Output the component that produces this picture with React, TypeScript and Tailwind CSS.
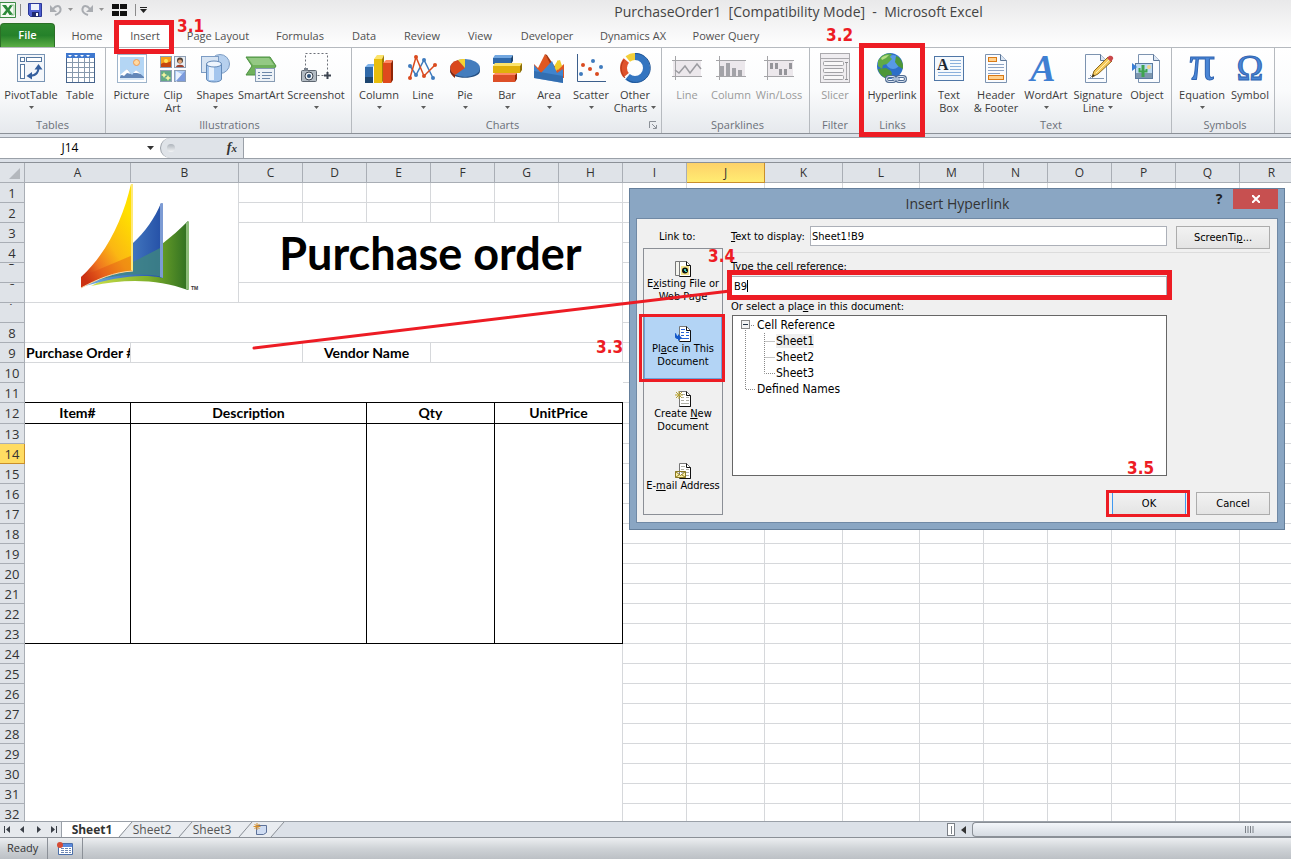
import type { ReactNode } from "react";

const UI = "font-['Open_Sans','Noto_Sans',sans-serif]";
const DLG = "font-['DejaVu_Sans_Condensed','DejaVu_Sans',sans-serif]";
const CELL = "font-['Lato','Open_Sans',sans-serif]";

/* ---------- ribbon icons ---------- */

function Svg({ children }: { children: ReactNode }) {
  return (
    <svg viewBox="0 0 32 32" className="h-8 w-8 shrink-0 overflow-visible" fill="none" aria-hidden="true">
      {children}
    </svg>
  );
}

const PivotIcon = () => (
  <Svg>
    <rect x="2.5" y="2.5" width="27" height="27" fill="#f4f7fb" stroke="#7894b4" />
    <rect x="5.5" y="5.5" width="4" height="4" fill="#fff" stroke="#55779f" />
    <rect x="11.5" y="5.5" width="15" height="4" fill="#fff" stroke="#55779f" />
    <rect x="5.5" y="12.5" width="4" height="14" fill="#fff" stroke="#55779f" />
    <path d="M15 24C22 23 23.500 20 23.500 15" stroke="#355f9e" strokeWidth="2" />
    <path d="M19.500 17.500 23.500 12l4 5.500zM17 20l-5.500 4 5.500 3.500z" fill="#355f9e" />
  </Svg>
);

const TableIcon = () => (
  <Svg>
    <rect x="2.500" y="1.500" width="28" height="29" fill="#fff" stroke="#46648c" />
    <rect x="2" y="1" width="29" height="5" fill="#3f78cf" />
    <path d="M4 3h4l-2 2zM10 3h4l-2 2zM16 3h4l-2 2zM22 3h4l-2 2z" fill="#fff" />
    <path d="M8.500 6v24M14.500 6v24M20.500 6v24M25.500 6v24M3 10.500h27M3 15.500h27M3 20.500h27M3 25.500h27" stroke="#8799ad" />
  </Svg>
);

const PictureIcon = () => (
  <Svg>
    <rect x="1.500" y="2.500" width="29" height="28" fill="#fff" stroke="#9eb4cb" />
    <rect x="4" y="5" width="24" height="23" fill="#b4d6f5" />
    <circle cx="20.500" cy="10.500" r="3" fill="#ffd9a0" stroke="#f09a52" />
    <path d="M4 25l7-8 5 6 4-5 8 7v3H4z" fill="#6387b8" />
    <path d="M4 23l7-6 4 5-4-1-3 3-2-1zM17 21l3-3 5 4-4-1z" fill="#fff" />
    <path d="M4 26h24v2H4z" fill="#d5e6f6" />
  </Svg>
);

const ClipArtIcon = () => (
  <Svg>
    <rect x="3.500" y="4.500" width="11" height="11" fill="#f6a21d" stroke="#8e9fb5" />
    <path d="M4 12c3-3 7 0 10-3v6H4z" fill="#c5480f" />
    <circle cx="9" cy="9" r="2" fill="#ffe65b" />
    <rect x="17.500" y="4.500" width="11" height="11" fill="#e9eef3" stroke="#8e9fb5" />
    <circle cx="23" cy="8.500" r="3" fill="#4e4136" />
    <circle cx="23" cy="9.500" r="2" fill="#e3a477" />
    <path d="M19 15c0-3 8-3 8 0z" fill="#9c3f2d" />
    <rect x="3.500" y="18.500" width="11" height="11" fill="#63a987" stroke="#8e9fb5" />
    <path d="M7 20l1 2 2 1-2 1-1 2-1-2-2-1 2-1zM11 23l1 2 2 1-2 1-1 2-1-2-2-1 2-1z" fill="#f3f3a0" />
    <rect x="17.500" y="18.500" width="11" height="11" fill="#aac8f3" stroke="#8e9fb5" />
    <path d="M19 19l9 5-9 6z" fill="#e9f1fd" />
    <path d="M28 19v10h-9z" fill="#7c9bdd" />
  </Svg>
);

const ShapesIcon = () => (
  <Svg>
    <circle cx="21" cy="12" r="9.500" fill="#b6d0ee" stroke="#7c9cc4" />
    <rect x="2.500" y="4.500" width="17" height="16" fill="#d7e4f3" stroke="#7c9cc4" />
    <path d="M7.500 12v15c0 4 15 4 15 0V12z" fill="#a3c5ed" stroke="#6389b7" />
    <path d="M10 14v14h5V14z" fill="#e7f1fc" />
    <ellipse cx="15" cy="12" rx="7.500" ry="3" fill="#eef5fd" stroke="#6389b7" />
  </Svg>
);

const SmartArtIcon = () => (
  <Svg>
    <path d="M1 5h24l6 9-6 9H1l6-9z" fill="#6fb15c" stroke="#4c9142" />
    <path d="M3 6h21l5 7H8z" fill="#94c984" />
    <rect x="10.500" y="16.500" width="19" height="13" fill="#edf2f7" stroke="#879bb3" />
    <path d="M13 20.500h2M17 20.500h10M13 23.500h2M17 23.500h10M13 26.500h2M17 26.500h8" stroke="#6b87a8" />
  </Svg>
);

const ScreenshotIcon = () => (
  <Svg>
    <rect x="5.500" y="1.500" width="22" height="22" stroke="#6c7078" strokeDasharray="2 2" />
    <path d="M27.500 20v7M24 23.500h7" stroke="#3c4450" strokeWidth="2" />
    <rect x="1.500" y="18.500" width="15" height="11" rx="1" fill="#b3bbc3" stroke="#5d6670" />
    <path d="M4 16h4v3H4z" fill="#77808a" />
    <circle cx="9" cy="24" r="4" fill="#eef2f5" stroke="#3c4450" />
    <circle cx="9" cy="24" r="2" fill="#2f5177" />
  </Svg>
);

const ColumnIcon = () => (
  <Svg>
    <path d="M2 15l3-3h7l-2 3z" fill="#7db2ea" />
    <path d="M2 15h8v16H2z" fill="#2f69a8" />
    <path d="M2 25h8v6H2z" fill="#1d456f" />
    <path d="M11 7l3-4h7l-2 4z" fill="#fbe36b" />
    <path d="M11 7h8v24h-8z" fill="#e8bd0c" />
    <path d="M19 7l2-4v24l-2 4z" fill="#a17f04" />
    <path d="M20 11l3-3h7l-2 3z" fill="#ff8a63" />
    <path d="M20 11h8v20h-8z" fill="#df4a1d" />
    <path d="M28 11l2-3v20l-2 3z" fill="#8f2506" />
  </Svg>
);

const LineIcon = () => (
  <Svg>
    <path d="M3 14l6 9 8-15 9 18" stroke="#3f7bbd" strokeWidth="1.500" />
    <path d="M3 26L9 5l8 19 11-11" stroke="#da4b1f" strokeWidth="1.500" />
    <g fill="#3f7bbd"><circle cx="3" cy="14" r="2" /><circle cx="9" cy="23" r="2" /><circle cx="17" cy="8" r="2" /><circle cx="26" cy="26" r="2" /></g>
    <g fill="#da4b1f"><circle cx="3" cy="26" r="2" /><circle cx="9" cy="5" r="2" /><circle cx="17" cy="24" r="2" /><circle cx="28" cy="13" r="2" /></g>
  </Svg>
);

const PieIcon = () => (
  <Svg>
    <path d="M1 16v3c0 9 30 9 30 0v-3z" fill="#244e80" />
    <ellipse cx="16" cy="16" rx="15" ry="9" fill="#447dbd" />
    <path d="M16 16L9 8C-1 11-1 19 6 23z" fill="#d9481c" />
    <path d="M16 16V7c-3 0-5 0-7 1z" fill="#f5d231" />
    <path d="M1 17c0 4 2 7 5 9v-3c-2-1-4-3-5-6z" fill="#8f2506" />
  </Svg>
);

const BarIcon = () => (
  <Svg>
    <path d="M2 6l2-3h18l-2 3z" fill="#72a7e0" /><path d="M2 6h18v6H2z" fill="#2f69ab" /><path d="M20 6l2-3v6l-2 3z" fill="#1d456f" />
    <path d="M2 14l2-3h27l-2 3z" fill="#fbe36b" /><path d="M2 14h27v7H2z" fill="#dfb00b" /><path d="M29 14l2-3v7l-2 3z" fill="#8f7004" />
    <path d="M2 23l2-2h22l-2 2z" fill="#ff8a63" /><path d="M2 23h22v7H2z" fill="#dd4f27" /><path d="M24 23l2-2v6l-2 3z" fill="#8f2506" />
  </Svg>
);

const AreaIcon = () => (
  <Svg>
    <path d="M20 16l5-8 2 5 1 6h-8z" fill="#f0cc2c" />
    <path d="M1 12l4 4 7-14 11 17 8-7v14L1 24z" fill="#df5722" />
    <path d="M12 2l2 1 8 12-2 2z" fill="#a3340d" />
    <path d="M24 9l3-1 2 6-4 4z" fill="#f0cc2c" />
    <path d="M1 13l7 8L19 9l5 12 6-4v14L1 26z" fill="#3f84ce" />
    <path d="M1 19l29 5v7L1 26z" fill="#2a5f9f" opacity=".6" />
  </Svg>
);

const ScatterIcon = () => (
  <Svg>
    <path d="M2.500 2v27.500H31" stroke="#3c5f8c" />
    <g fill="#3f7bbd"><circle cx="18" cy="9" r="2" /><circle cx="26" cy="15" r="2" /><circle cx="6" cy="22" r="2" /></g>
    <g fill="#da4b1f"><circle cx="8" cy="13" r="2" /><circle cx="15" cy="17" r="2" /><circle cx="22" cy="22" r="2" /></g>
  </Svg>
);

const OtherIcon = () => (
  <Svg>
    <g transform="rotate(-90 16 16)" strokeWidth="7">
      <circle cx="16" cy="16" r="11.500" stroke="#3475c0" strokeDasharray="44 100" />
      <circle cx="16" cy="16" r="11.500" stroke="#e0532c" strokeDasharray="16 100" strokeDashoffset="-46" />
      <circle cx="16" cy="16" r="11.500" stroke="#f3cf39" strokeDasharray="8 100" strokeDashoffset="-64" />
    </g>
    <path d="M16 1.500a14.500 14.500 0 1 1-8 26" stroke="#1f5596" />
    <path d="M6 26C1 20 1 13 5 8" stroke="#b33a18" />
  </Svg>
);

const SparkLineIcon = () => (
  <Svg>
    <path d="M2 8h28v16H2z" fill="#ece8ec" />
    <path d="M1 8.500h30M1 24.500h30M4.500 4v24" stroke="#a5a5a8" />
    <path d="M4 18l4 3 6-7 5 7 7-9 4 5" stroke="#9b9ba0" strokeWidth="1.500" />
  </Svg>
);

const SparkColumnIcon = () => (
  <Svg>
    <path d="M4 8h26v16H4z" fill="#ece8ec" />
    <path d="M1 8.500h30M1 24.500h30M4.500 4v24" stroke="#a5a5a8" />
    <path d="M5 14h4v10H5zM11 11h4v13h-4zM17 16h4v8h-4zM23 18h4v6h-4z" fill="#a3a3a8" />
  </Svg>
);

const SparkWinIcon = () => (
  <Svg>
    <path d="M4 8h26v16H4z" fill="#ece8ec" />
    <path d="M1 8.500h30M1 24.500h30M4.500 4v24" stroke="#a5a5a8" />
    <path d="M7 11h3v6H7zM12 11h3v6h-3zM16 17h3v6h-3zM21 17h3v6h-3zM26 11h3v6h-3z" fill="#95959a" />
  </Svg>
);

const SlicerIcon = () => (
  <Svg>
    <rect x="1.500" y="1.500" width="29" height="29" fill="#efedf0" stroke="#aaa9ad" />
    <path d="M2 6.500h28M27.500 10v18" stroke="#aaa9ad" />
    <path d="M26 10.500h3M26 27.500h3" stroke="#8f8f93" />
    <rect x="4.500" y="9.500" width="20" height="4" rx="1" fill="#f8f7f8" stroke="#a1a1a5" />
    <rect x="4.500" y="16.500" width="20" height="4" rx="1" fill="#f8f7f8" stroke="#a1a1a5" />
    <rect x="4.500" y="23.500" width="20" height="4" rx="1" fill="#f8f7f8" stroke="#a1a1a5" />
  </Svg>
);

const HyperlinkIcon = () => (
  <Svg>
    <circle cx="14" cy="14" r="13" fill="#2d6fc8" />
    <circle cx="17" cy="10" r="7" fill="#62a4ec" opacity=".8" />
    <path d="M2 9c3-6 9-9 14-7l-2 3 2 2-5 5-4 1-1 4-4-3z" fill="#5faa46" />
    <path d="M2 17l8-1 5 3 1 3-3 5C7 26 3 22 2 17zM20 4c4 1 6 5 7 9v4l-5-3-3-4z" fill="#4d9739" />
    <path d="M5 6c2-2 5-3 8-3l-3 3-4 2z" fill="#b3dd84" />
    <rect x="10.500" y="24.500" width="9" height="5" rx="2.500" stroke="#4f6b92" strokeWidth="3" />
    <rect x="20.500" y="24.500" width="9" height="5" rx="2.500" stroke="#4f6b92" strokeWidth="3" />
    <rect x="10.500" y="24.500" width="9" height="5" rx="2.500" stroke="#d8e2f0" />
    <rect x="20.500" y="24.500" width="9" height="5" rx="2.500" stroke="#d8e2f0" />
    <path d="M16 27h8" stroke="#a9bbd5" strokeWidth="2" />
  </Svg>
);

const TextBoxIcon = () => (
  <Svg>
    <rect x="1.500" y="4.500" width="29" height="24" fill="#f5f9fd" stroke="#4f76a6" />
    <text x="4" y="18" fontSize="16" fontWeight="bold" fontFamily="Liberation Serif, serif" fill="#1d2733">A</text>
    <path d="M17 8.500h11M17 11.500h11M17 14.500h11M17 17.500h11M5 20.500h23M5 23.500h23" stroke="#8ab0dc" />
  </Svg>
);

const HeaderIcon = () => (
  <Svg>
    <path d="M5.500 2.500h15l6 6v22h-21z" fill="#fafcff" stroke="#7c93b0" />
    <path d="M20.500 2.500v6h6" fill="#dbe6f3" stroke="#5c7697" />
    <rect x="8.500" y="5.500" width="8" height="4" fill="#ffd18f" stroke="#d97a16" />
    <rect x="8.500" y="23.500" width="15" height="4" fill="#ffd18f" stroke="#d97a16" />
    <path d="M8 12.500h16M8 15.500h16M8 18.500h16M8 21.500h12" stroke="#8ea4c4" />
  </Svg>
);

const WordArtIcon = () => (
  <Svg>
    <text x="13" y="29" textAnchor="middle" fontSize="38" fontStyle="italic" fontWeight="bold" fontFamily="Liberation Serif, serif" fill="#3f7fd2">A</text>
  </Svg>
);

const SignatureIcon = () => (
  <Svg>
    <path d="M3.500 2.500h15l6 6v22h-21z" fill="#fafcff" stroke="#7c93b0" />
    <path d="M18.500 2.500v6h6" fill="#dbe6f3" stroke="#5c7697" />
    <path d="M6 26.500h16M8 23l3 3M11 23l-3 3" stroke="#8196b4" />
    <path d="M10 25l2-6L26 5l4 4-14 13z" fill="#f4c95d" stroke="#8d6a1d" />
    <path d="M14 21L28 7" stroke="#fff0b5" />
    <path d="M25 6l2-2c2-1 5 1 4 3l-2 3z" fill="#c9474a" />
    <path d="M10 25l1-3 2 2z" fill="#332a1c" />
  </Svg>
);

const ObjectIcon = () => (
  <Svg>
    <path d="M7.500 2.500h15l6 6v22h-21z" fill="#fafcff" stroke="#7c93b0" />
    <path d="M22.500 2.500v6h6" fill="#dbe6f3" stroke="#5c7697" />
    <rect x="4.500" y="11.500" width="17" height="15" fill="#bcdaf2" stroke="#5b7a9f" />
    <path d="M5 21h16v5H5z" fill="#7d97ae" />
    <circle cx="18" cy="15" r="2" fill="#f5d58b" />
    <path d="M12 13v12" stroke="#3fa34f" strokeWidth="3" />
    <path d="M8.500 16v3.500h7V17" stroke="#3fa34f" strokeWidth="2" />
    <path d="M1 11l5 4-5 4z" fill="#3a7fd5" />
  </Svg>
);

const PiIcon = () => (
  <Svg>
    <text x="16" y="28" textAnchor="middle" fontSize="50" fontFamily="Liberation Serif, serif" fill="#4a86d6" stroke="#2f64b2">π</text>
  </Svg>
);

const OmegaIcon = () => (
  <Svg>
    <text x="16" y="28" textAnchor="middle" fontSize="36" fontFamily="Liberation Serif, serif" fill="#4a86d6" stroke="#2f64b2">Ω</text>
  </Svg>
);

/* ---------- ribbon ---------- */

type Cmd = { lines: string[]; icon: ReactNode; w: string; arrow?: boolean; off?: boolean };

const groups: { title: string; w: string; cmds: Cmd[]; launcher?: boolean }[] = [
  {
    title: "Tables",
    w: "w-[106px]",
    cmds: [
      { lines: ["PivotTable"], icon: <PivotIcon />, w: "w-[62px]", arrow: true },
      { lines: ["Table"], icon: <TableIcon />, w: "w-9" },
    ],
  },
  {
    title: "Illustrations",
    w: "w-[246px] pl-0.5",
    cmds: [
      { lines: ["Picture"], icon: <PictureIcon />, w: "w-[47px]" },
      { lines: ["Clip", "Art"], icon: <ClipArtIcon />, w: "w-9" },
      { lines: ["Shapes"], icon: <ShapesIcon />, w: "w-12", arrow: true },
      { lines: ["SmartArt"], icon: <SmartArtIcon />, w: "w-11" },
      { lines: ["Screenshot"], icon: <ScreenshotIcon />, w: "w-[66px]", arrow: true },
    ],
  },
  {
    title: "Charts",
    w: "w-[310px] pl-1",
    launcher: true,
    cmds: [
      { lines: ["Column"], icon: <ColumnIcon />, w: "w-[46px]", arrow: true },
      { lines: ["Line"], icon: <LineIcon />, w: "w-[42px]", arrow: true },
      { lines: ["Pie"], icon: <PieIcon />, w: "w-[42px]", arrow: true },
      { lines: ["Bar"], icon: <BarIcon />, w: "w-[42px]", arrow: true },
      { lines: ["Area"], icon: <AreaIcon />, w: "w-[42px]", arrow: true },
      { lines: ["Scatter"], icon: <ScatterIcon />, w: "w-[42px]", arrow: true },
      { lines: ["Other", "Charts"], icon: <OtherIcon />, w: "w-[46px]", arrow: true },
    ],
  },
  {
    title: "Sparklines",
    w: "w-[148px] pl-1",
    cmds: [
      { lines: ["Line"], icon: <SparkLineIcon />, w: "w-[42px]", off: true },
      { lines: ["Column"], icon: <SparkColumnIcon />, w: "w-[46px]", off: true },
      { lines: ["Win/Loss"], icon: <SparkWinIcon />, w: "w-[50px]", off: true },
    ],
  },
  { title: "Filter", w: "w-[51px]", cmds: [{ lines: ["Slicer"], icon: <SlicerIcon />, w: "w-[50px]", off: true }] },
  { title: "Links", w: "w-16", cmds: [{ lines: ["Hyperlink"], icon: <HyperlinkIcon />, w: "w-[62px]" }] },
  {
    title: "Text",
    w: "w-[247px] pl-1.5",
    cmds: [
      { lines: ["Text", "Box"], icon: <TextBoxIcon />, w: "w-9" },
      { lines: ["Header", "& Footer"], icon: <HeaderIcon />, w: "w-[58px]" },
      { lines: ["WordArt"], icon: <WordArtIcon />, w: "w-[42px]", arrow: true },
      { lines: ["Signature", "Line"], icon: <SignatureIcon />, w: "w-[62px]", arrow: true },
      { lines: ["Object"], icon: <ObjectIcon />, w: "w-9" },
    ],
  },
  {
    title: "Symbols",
    w: "w-[103px] pl-1",
    cmds: [
      { lines: ["Equation"], icon: <PiIcon />, w: "w-[52px]", arrow: true },
      { lines: ["Symbol"], icon: <OmegaIcon />, w: "w-11" },
    ],
  },
];

function Caret({ className = "" }: { className?: string }) {
  return (
    <svg viewBox="0 0 5 3" className={`h-[3px] w-[5px] shrink-0 ${className}`} aria-hidden="true">
      <path d="M0 0h5L2.500 3z" fill="#5b5b5b" />
    </svg>
  );
}

function Command({ cmd }: { cmd: Cmd }) {
  return (
    <button
      type="button"
      disabled={cmd.off}
      className={`flex h-[66px] shrink-0 flex-col items-center text-[11px] leading-[13px] whitespace-nowrap ${cmd.w} ${cmd.off ? "text-[#9a9a9a]" : "text-[#3b3b3b]"}`}
    >
      {cmd.icon}
      <span className="mt-1">{cmd.lines[0]}</span>
      {cmd.lines[1] ? (
        <span className="flex items-center gap-1">
          {cmd.lines[1]}
          {cmd.arrow && <Caret />}
        </span>
      ) : (
        cmd.arrow && <Caret className="mt-[5px]" />
      )}
    </button>
  );
}

function Ribbon() {
  return (
    <div className="flex h-[86px] shrink-0 overflow-hidden border-b border-[#8b9097] bg-linear-to-b from-white via-[#fafbfc] to-[#e6e9ed]">
      {groups.map((g) => (
        <section key={g.title} className={`flex shrink-0 flex-col border-r border-[#b6babf] pt-1 ${g.w}`}>
          <div className="flex">
            {g.cmds.map((c) => (
              <Command key={c.lines.join(" ")} cmd={c} />
            ))}
          </div>
          <div className="flex items-center text-[11px] leading-[14px] text-[#6b7079]">
            <span className="flex-1 text-center">{g.title}</span>
            {g.launcher && (
              <svg viewBox="0 0 8 8" className="mr-1 h-2 w-2" fill="none" stroke="#8b9097" aria-hidden="true">
                <path d="M.5 7V.5H7M3 3l4 4M7.500 4v3.500H4" />
              </svg>
            )}
          </div>
        </section>
      ))}
    </div>
  );
}

/* ---------- title bar and tabs ---------- */

function TitleBar() {
  return (
    <div className="flex h-[23px] shrink-0 items-center">
      <div className="flex w-[306px] shrink-0 items-center pb-1">
        <svg viewBox="0 0 16 16" className="h-4 w-4" aria-hidden="true">
          <path d="M0 .5h15.500v15H0z" fill="#f4faf3" stroke="#3c8b45" />
          <path d="M2 3h4l2 3 2-3h3L9.500 8l4 5h-4L7.500 10l-2 3H2l4-5z" fill="#2c8a3a" />
          <path d="M11 3h3v10h-3" stroke="#9ccb9e" fill="none" />
        </svg>
        <span className="ml-1 h-3 w-px bg-[#8b8b8b]" />
        <svg viewBox="0 0 14 14" className="ml-[7px] h-3.5 w-3.5" aria-hidden="true">
          <path d="M.5.5h13v13h-11l-2-2z" fill="#4d5ed0" stroke="#2b3796" />
          <path d="M3 1h8v6H3z" fill="#eef2fb" />
          <path d="M4 9h7v5H4z" fill="#1f2a70" />
          <path d="M8 10h2v3H8z" fill="#fff" />
        </svg>
        <svg viewBox="0 0 12 12" className="ml-2 h-3 w-3" fill="none" aria-hidden="true">
          <path d="M3 5c3-4 7-4 7.500 0C11 8 8 10 5 11" stroke="#a9acb1" strokeWidth="2" />
          <path d="M0 1v7h7z" fill="#a9acb1" />
        </svg>
        <Caret className="ml-1.5 opacity-60" />
        <svg viewBox="0 0 12 12" className="ml-2 h-3 w-3" fill="none" aria-hidden="true">
          <path d="M9 5C6 1 2 1 1.500 5 1 8 4 10 7 11" stroke="#a9acb1" strokeWidth="2" />
          <path d="M12 1v7H5z" fill="#a9acb1" />
        </svg>
        <Caret className="ml-1.5 opacity-60" />
        <svg viewBox="0 0 15 12" className="ml-2 h-3 w-[15px]" aria-hidden="true">
          <path d="M0 0h7v5H0zM8 0h7v5H8zM0 7h7v5H0zM8 7h7v5H8z" fill="#111" />
        </svg>
        <span className="mr-1 ml-2 h-3 w-px bg-[#8b8b8b]" />
        <svg viewBox="0 0 7 6" className="h-1.5 w-[7px]" aria-hidden="true">
          <path d="M0 0h7v1H0zM0 2h7L3.500 6z" fill="#222" />
        </svg>
      </div>
      <h1 className="flex-1 text-center text-sm whitespace-pre text-[#444]">
        {"PurchaseOrder1  [Compatibility Mode]  -  Microsoft Excel"}
      </h1>
    </div>
  );
}

const tabs = [
  { name: "Home", w: "w-16" },
  { name: "Insert", w: "w-[52px]" },
  { name: "Page Layout", w: "w-[94px]" },
  { name: "Formulas", w: "w-[70px]" },
  { name: "Data", w: "w-[58px]" },
  { name: "Review", w: "w-[58px]" },
  { name: "View", w: "w-[58px]" },
  { name: "Developer", w: "w-[76px]" },
  { name: "Dynamics AX", w: "w-24" },
  { name: "Power Query", w: "w-[90px]" },
];

function TabRow() {
  return (
    <nav className="flex h-[25px] shrink-0 border-b border-[#b6babf] text-[11px]">
      <button type="button" className="w-[55px] rounded-t-sm border border-b-0 border-[#2b6f26] bg-linear-to-b from-[#2f8a30] via-[#25812a] to-[#5aae45] font-semibold text-white">
        File
      </button>
      {tabs.map((t) => (
        <button
          key={t.name}
          type="button"
          className={`shrink-0 pt-0.5 whitespace-nowrap text-[#505050] ${t.w} ${t.name === "Insert" ? "bg-white" : ""}`}
        >
          {t.name}
        </button>
      ))}
    </nav>
  );
}

function FormulaBar() {
  return (
    <div className="flex h-[29px] shrink-0 flex-col border-b border-[#8b9097] bg-[#dce1e8] pt-[3px]">
      <div className="flex h-[22px] border-y border-[#9aa0a8] bg-white">
        <input aria-label="Name Box" defaultValue="J14" className="w-[140px] bg-white text-center text-xs text-black outline-none" />
        <button type="button" aria-label="Name list" className="flex w-5 items-center justify-center">
          <svg viewBox="0 0 7 4" className="h-1 w-[7px]" aria-hidden="true">
            <path d="M0 0h7L3.500 4z" fill="#333" />
          </svg>
        </button>
        <div className="flex w-[84px] items-center justify-between rounded-l-full border-r border-l border-[#9aa0a8] bg-[#dfe3e8] pr-1.5 pl-1.5">
          <span className="h-2 w-2 rounded-full bg-linear-to-b from-[#aeb4bb] to-[#f2f4f6]" />
          <span className="font-['Liberation_Serif',serif] text-sm leading-4 font-bold text-[#333] italic">
            f<span className="text-[11px]">x</span>
          </span>
        </div>
        <input aria-label="Formula" className="min-w-0 flex-1 bg-white px-1 outline-none" />
      </div>
    </div>
  );
}

/* ---------- worksheet ---------- */

const cols = [
  { id: "A", w: "w-[106px]" },
  { id: "B", w: "w-[108px]" },
  ...["C", "D", "E", "F", "G", "H", "I"].map((id) => ({ id, w: "w-16" })),
  { id: "J", w: "w-[78px]" },
  { id: "K", w: "w-[78px]" },
  { id: "L", w: "w-[77px]" },
  ...["M", "N", "O", "P", "Q", "R"].map((id) => ({ id, w: "w-16" })),
];

const grid = "border-r border-b border-[#d6d8db]";
const black = "border-r border-b border-black";
const bold = "text-sm leading-[18px] font-bold";

function DynamicsLogo() {
  return (
    <svg viewBox="0 0 120 114" className="ml-[54px] h-[114px] w-[120px]" aria-label="Logo">
      <defs>
        <linearGradient id="sailA" x1="0.2" y1="1" x2="0.8" y2="0.2">
          <stop offset="0" stopColor="#c42a12" />
          <stop offset=".25" stopColor="#ef7420" />
          <stop offset=".55" stopColor="#fbb713" />
          <stop offset="1" stopColor="#ffe000" />
        </linearGradient>
        <linearGradient id="sailB" x1="0" y1="0" x2="1" y2="0">
          <stop offset="0" stopColor="#6eb0e2" />
          <stop offset="1" stopColor="#244fa6" />
        </linearGradient>
        <linearGradient id="sailC" x1="0" y1="0" x2="1" y2="0">
          <stop offset="0" stopColor="#cfe04a" />
          <stop offset=".6" stopColor="#7eb02a" />
          <stop offset="1" stopColor="#2f6f22" />
        </linearGradient>
      </defs>
      <path d="M83 61C92 54 101 46 109 38v69C80 97 50 95 12 103 45 86 62 92 83 94z" fill="url(#sailC)" />
      <path d="M107 40l3-2v69l-3-1z" fill="#8cbc7a" />
      <path d="M12 99c15-7 25-10 42-12V60C66 49 76 35 82 20l2 2v73C60 90 35 95 6 103z" fill="url(#sailB)" />
      <path d="M54 79l29-15v30c-18-4-40-3-65 3z" fill="#3f8680" opacity=".8" />
      <path d="M81 21l3-1v75l-3-1z" fill="#7c9bd4" />
      <path d="M2 94C28 70 44 36 52 1l2 1v86C35 89 18 96 2 105z" fill="url(#sailA)" />
      <path d="M2 94l52-22v16C35 89 18 96 2 105z" fill="#dd4214" opacity=".35" />
      <path d="M52 1h2v87l-2-1z" fill="#ffe979" />
      <path d="M2 105c17-9 33-16 52-17" stroke="#fbd9a5" fill="none" />
      <text x="112" y="107" fontSize="5" fontWeight="bold" fontFamily="Liberation Sans, sans-serif" fill="#333">TM</text>
    </svg>
  );
}

// Cells of the order form, columns A to H, for the rows that start a block
function formCells(row: number): ReactNode {
  if (row <= 2)
    return (
      <>
        {row === 1 && (
          <td rowSpan={6} colSpan={2} className={`p-0 align-top ${grid}`}>
            <DynamicsLogo />
          </td>
        )}
        {["C", "D", "E", "F", "G", "H"].map((c) => (
          <td key={c} className={`p-0 ${grid}`} />
        ))}
      </>
    );
  if (row === 3)
    return (
      <td rowSpan={3} colSpan={6} className={`p-0 text-center text-[45px] leading-[50px] font-bold whitespace-nowrap ${grid}`}>
        Purchase order
      </td>
    );
  if (row === 6) return <td colSpan={6} className={`p-0 ${grid}`} />;
  if (row === 7) return <td rowSpan={2} colSpan={8} className={`p-0 ${grid}`} />;
  if (row === 9)
    return (
      <>
        <td className={`max-w-0 overflow-hidden py-0 pr-0 pl-px whitespace-nowrap ${bold} ${grid}`}>Purchase Order #</td>
        <td colSpan={2} className={`p-0 ${grid}`} />
        <td colSpan={2} className={`p-0 text-center ${bold} ${grid}`}>Vendor Name</td>
        <td colSpan={3} className={`p-0 ${grid}`} />
      </>
    );
  if (row === 10) return <td rowSpan={2} colSpan={8} className="border-b border-black p-0" />;
  if (row === 12)
    return (
      <>
        <td className={`p-0 text-center ${bold} ${black}`}>Item#</td>
        <td colSpan={3} className={`p-0 text-center ${bold} ${black}`}>Description</td>
        <td colSpan={2} className={`p-0 text-center ${bold} ${black}`}>Qty</td>
        <td colSpan={2} className={`p-0 text-center ${bold} ${black}`}>UnitPrice</td>
      </>
    );
  if (row === 13)
    return (
      <>
        <td rowSpan={11} className={`p-0 ${black}`} />
        <td rowSpan={11} colSpan={3} className={`p-0 ${black}`} />
        <td rowSpan={11} colSpan={2} className={`p-0 ${black}`} />
        <td rowSpan={11} colSpan={2} className={`p-0 ${black}`} />
      </>
    );
  if (row === 24) return <td rowSpan={9} colSpan={8} className={`p-0 ${grid}`} />;
  return null;
}

function Worksheet() {
  return (
    <div className="min-h-0 flex-1 overflow-hidden bg-white">
      <table className={`w-[1304px] table-fixed border-separate border-spacing-0 text-[13px] leading-[18px] text-black ${CELL}`}>
        <colgroup>
          <col className="w-[25px]" />
          {cols.map((c) => (
            <col key={c.id} className={c.w} />
          ))}
        </colgroup>
        <thead>
          <tr className={`h-5 ${UI}`}>
            <th className="border-r border-b border-[#a9aeb5] bg-[#dfe3e8] p-0">
              <svg viewBox="0 0 12 12" className="ml-2 h-3 w-3" aria-hidden="true">
                <path d="M12 1v11H1z" fill="#b4b8bd" />
              </svg>
            </th>
            {cols.map((c) => (
              <th
                key={c.id}
                className={`border-r border-b p-0 text-xs font-normal text-[#333] ${
                  c.id === "J" ? "border-[#c98f2b] bg-linear-to-b from-[#fdd169] to-[#ffec72]" : "border-[#a9aeb5] bg-[#dfe3e8]"
                }`}
              >
                {c.id}
              </th>
            ))}
          </tr>
        </thead>
        <tbody>
          {Array.from({ length: 32 }, (_, i) => i + 1).map((row) => (
            <tr key={row} className={row === 12 ? "h-[21px]" : "h-5"}>
              <th
                className={`border-r border-b p-0 text-[13px] font-normal text-[#333] ${UI} ${
                  row === 14 ? "border-[#c98f2b] bg-[#ffdc62]" : "border-[#a9aeb5] bg-[#dfe3e8]"
                }`}
              >
                {row >= 5 && row <= 7 ? (
                  <span className="mb-4 flex h-[2px] items-end justify-center overflow-hidden leading-[11px]">{row}</span>
                ) : (
                  row
                )}
              </th>
              {formCells(row)}
              {cols.slice(8).map((c) => (
                <td key={c.id} className={`p-0 ${grid}`} />
              ))}
            </tr>
          ))}
        </tbody>
      </table>
    </div>
  );
}

/* ---------- bottom bars ---------- */

function SheetTabs() {
  return (
    <div className="flex h-4 shrink-0 items-stretch border-t border-[#9aa0a8] bg-[#dce1e8]">
      <div className="flex w-[62px] items-center justify-around border-r border-[#9aa0a8] bg-[#e6e9ed]">
        {["M0 0h1v7H0zM6 0v7L2 3.500z", "M5 0v7L1 3.500z", "M2 0v7l4-3.500z", "M1 0v7l4-3.500zM6 0h1v7H6z"].map((d, i) => (
          <button key={d} type="button" aria-label={["First", "Previous", "Next", "Last"][i]}>
            <svg viewBox="0 0 7 7" className="h-[7px] w-[7px]">
              <path d={d} fill="#3a3f47" />
            </svg>
          </button>
        ))}
      </div>
      <div className="relative w-[226px]">
        <svg viewBox="0 0 226 15" className="absolute inset-0 h-[15px] w-[226px]" aria-hidden="true">
          <path d="M0 0h70L57 15H0z" fill="#fff" />
          <path d="M70 0h60l-13 15H58zM130 0h60l-13 15h-59zM190 0h32l-13 15h-31z" fill="#e9ecf0" />
          <path d="M57 15L70 0M117 15l13-15M177 15l13-15M209 15L222 0" stroke="#8b9097" fill="none" />
          <path d="M194.500 3.500h10v7l-3 2h-7z" fill="#cfdcf2" stroke="#5e7299" />
          <path d="M195 1v7M191.500 4.500h7M192.500 2l5 5M197.500 2l-5 5" stroke="#d9902a" />
        </svg>
        <div className="relative flex h-[15px] items-center text-xs leading-[15px] text-[#555]">
          <button type="button" className="w-[60px] font-bold text-[#333]">Sheet1</button>
          <button type="button" className="w-[60px]">Sheet2</button>
          <button type="button" className="w-[60px]">Sheet3</button>
        </div>
      </div>
      <div className="ml-auto flex w-[344px] items-stretch">
        <span className="my-px flex w-2 items-center justify-center border border-[#7b8087] bg-white">
          <span className="h-2 w-px bg-[#7b8087]" />
        </span>
        <button type="button" aria-label="Scroll left" className="flex w-[17px] items-center justify-center">
          <svg viewBox="0 0 5 8" className="h-2 w-[5px]">
            <path d="M5 0v8L0 4z" fill="#333" />
          </svg>
        </button>
        <div className="flex flex-1 items-center justify-end rounded-l-sm border border-r-0 border-[#8b9097] bg-linear-to-b from-[#f3f6fa] to-[#d6dbe2] pr-[37px]">
          <svg viewBox="0 0 9 7" className="h-[7px] w-[9px]" aria-hidden="true">
            <path d="M.5 0v7M3 0v7M5.500 0v7M8 0v7" stroke="#7b8087" />
          </svg>
        </div>
      </div>
    </div>
  );
}

function StatusBar() {
  return (
    <footer className="flex h-[22px] shrink-0 items-center border-t border-[#8b9097] bg-linear-to-b from-[#eceef1] via-[#cfd3d7] to-[#bcc0c5] text-[11px] text-[#333]">
      <span className="w-[47px] pl-[7px]">Ready</span>
      <span className="h-full w-px bg-[#8b9097]" />
      <button type="button" aria-label="Record macro" className="flex w-[34px] justify-center">
        <svg viewBox="0 0 16 14" className="h-3.5 w-4">
          <path d="M1.500 1.500h14v11h-14z" fill="#fff" stroke="#4a6ea9" />
          <path d="M2 2h13v3H2z" fill="#5b8add" />
          <path d="M4 6.500h3M8 6.500h3M12 6.500h2M4 8.500h3M8 8.500h3M12 8.500h2M4 10.500h3M8 10.500h3M12 10.500h2" stroke="#6c86b3" />
          <circle cx="3" cy="3" r="3" fill="#d64c35" />
        </svg>
      </button>
      <span className="h-full w-px bg-[#8b9097]" />
    </footer>
  );
}

/* ---------- Insert Hyperlink dialog ---------- */

function PageGlyph({ kind }: { kind: "web" | "place" | "new" | "mail" }) {
  return (
    <svg viewBox="0 0 16 16" className="h-4 w-4 shrink-0" fill="none" aria-hidden="true">
      {kind === "web" && <path d="M.5.5h7v14h-7z" fill="#f4f4ee" stroke="#777" />}
      <path d="M4.500.5h7l4 4v11h-11z" fill="#fff" stroke="#777" />
      <path d="M11.500.5v4h4v11h-11" stroke="#111" />
      {kind !== "web" && <path d="M6 3.500h4M6 6.500h3M11 6.500h3M6 9.500h3M11 9.500h3M6 12.500h8" stroke={kind === "place" ? "#2a62d6" : "#b0b0a5"} />}
      {kind === "web" && (
        <>
          <path d="M6 5h8v9H6z" fill="#f5e58a" />
          <circle cx="10" cy="9.500" r="3" fill="#111" />
          <path d="M9 8h2v2H9zM10 10h2v1h-2z" fill="#39c6bb" />
        </>
      )}
      {kind === "place" && <path d="M0 7c2 0 1 3 3 3V8l4 4-4 3v-2C0 13-1 10 0 7z" fill="#1458c9" />}
      {kind === "new" && <path d="M4 0v8M0 4h8M1 1l6 6M7 1L1 7" stroke="#b7a231" />}
      {kind === "mail" && <path d="M.5 8.500h10v6H.5zM.5 8.500l5 4 5-4M.5 14.500l4-3M10.500 14.500l-4-3" fill="#fff3a8" stroke="#8b7a23" />}
    </svg>
  );
}

const targets: { kind: "web" | "place" | "new" | "mail"; label: ReactNode; cls: string }[] = [
  { kind: "web", label: <>E<u>x</u>isting File or<br />Web Page</>, cls: "h-[66px] pt-3" },
  { kind: "place", label: <>Pl<u>a</u>ce in This<br />Document</>, cls: "h-16 bg-[#b3d4f5] border border-[#6ba3dc] pt-2.5" },
  { kind: "new", label: <>Create <u>N</u>ew<br />Document</>, cls: "h-[68px] pt-3" },
  { kind: "mail", label: <>E-<u>m</u>ail Address</>, cls: "h-[66px] pt-4" },
];

const dlgButton = "h-[23px] border border-[#acacac] bg-linear-to-b from-[#f2f2f2] to-[#e4e4e4] text-center";

function HyperlinkDialog() {
  return (
    <div
      role="dialog"
      aria-label="Insert Hyperlink"
      className="absolute top-[188px] left-[629px] flex h-[342px] w-[656px] flex-col border border-[#657f9b] bg-[#8aa6c3] px-1.5 pb-1.5"
    >
      <div className={`flex h-[29px] shrink-0 text-[#333] ${UI}`}>
        <h2 className="flex-1 pl-[74px] text-center text-sm leading-[29px]">Insert Hyperlink</h2>
        <button type="button" aria-label="Help" className="h-5 w-7 text-sm leading-5 font-bold text-[#222]">?</button>
        <button type="button" aria-label="Close" className="flex h-5 w-[45px] items-center justify-center bg-[#c75050]">
          <svg viewBox="0 0 8 8" className="h-2 w-2">
            <path d="M0 0l8 8M8 0L0 8" stroke="#fff" strokeWidth="2" />
          </svg>
        </button>
      </div>

      <div className={`flex flex-1 gap-2 border border-[#7089a5] bg-[#f0f0f0] py-[7px] pr-[7px] pl-1.5 text-[11px] leading-[13px] text-black ${DLG}`}>
        <div className="flex w-20 shrink-0 flex-col">
          <div className="h-[22px] pl-4 leading-[22px]">Link to:</div>
          <div className="flex h-[267px] flex-col border border-[#8b8f96]">
            {targets.map((t) => (
              <button key={t.kind} type="button" className={`flex shrink-0 flex-col items-center whitespace-nowrap ${t.cls}`}>
                <PageGlyph kind={t.kind} />
                <span>{t.label}</span>
              </button>
            ))}
          </div>
        </div>

        <div className="flex min-w-0 flex-1 flex-col">
          <div className="flex h-[27px] border-b border-[#dcdcdc]">
            <label htmlFor="display" className="w-[79px] shrink-0 leading-[22px] whitespace-nowrap">
              <u>T</u>ext to display:
            </label>
            <input id="display" defaultValue="Sheet1!B9" className="h-5 min-w-0 flex-1 border border-[#acb0b8] bg-white px-px" />
            <button type="button" className={`ml-[9px] w-[94px] shrink-0 ${dlgButton}`}>
              ScreenTi<u>p</u>...
            </button>
          </div>
          <div className="mr-[103px] flex flex-col">
            <label htmlFor="cellref" className="mt-[7px] h-4">
              Type the c<u>e</u>ll reference:
            </label>
            <div className="flex h-5 items-center border border-[#acb0b8] bg-white pl-0.5">
              <input id="cellref" defaultValue="B9" className="field-sizing-content outline-none" />
              <span className="h-3 w-px bg-black" />
            </div>
            <div className="mt-1 h-[15px]">
              Or select a pla<u>c</u>e in this document:
            </div>
            <div className="relative ml-px h-[161px] border border-[#666] bg-white pt-px">
              <svg viewBox="0 0 60 80" className="absolute top-0 left-0 h-20 w-[60px]" fill="none" stroke="#888" strokeDasharray="1 1" aria-hidden="true">
                <path d="M12.500 14v59.500H22M31.500 17v40.500H42M31.500 25.500H42M31.500 41.500H42M18 9.500h4" />
                <rect x="8.500" y="4.500" width="8" height="8" fill="#f3f3f3" stroke="#888" strokeDasharray="none" />
                <path d="M10 8.500h5" stroke="#234" strokeDasharray="none" />
              </svg>
              <ul className="relative text-xs leading-4">
                <li className="pl-6">Cell Reference</li>
                <li className="pl-[43px]"><span className="bg-[#efefef]">Sheet1</span></li>
                <li className="pl-[43px]">Sheet2</li>
                <li className="pl-[43px]">Sheet3</li>
                <li className="pl-6">Defined Names</li>
              </ul>
            </div>
          </div>
          <div className="mt-auto flex justify-end gap-2.5">
            <button type="button" className="h-[23px] w-[74px] border border-[#3f98f0] bg-linear-to-b from-[#f2f2f2] to-[#e4e4e4]">OK</button>
            <button type="button" className={`w-[74px] ${dlgButton}`}>Cancel</button>
          </div>
        </div>
      </div>
    </div>
  );
}

/* ---------- step markers drawn over the window ---------- */

const frames = [
  "top-5 left-[114px] h-[34px] w-[60px] border-[5px]",
  "top-[43px] left-[859px] h-[94px] w-[66px] border-[5px]",
  "top-[314px] left-[639px] h-[68px] w-[86px] border-[3px]",
  "top-[270px] left-[727px] h-[30px] w-[445px] border-[5px]",
  "top-[490px] left-[1106px] h-[27px] w-[84px] border-[3px]",
];

const steps = [
  { n: "3.1", pos: "top-4 left-[177px]" },
  { n: "3.2", pos: "top-[25px] left-[826px]" },
  { n: "3.3", pos: "top-[337px] left-[596px]" },
  { n: "3.4", pos: "top-[246px] left-[708px]" },
  { n: "3.5", pos: "top-[458px] left-[1127px]" },
];

function Markers() {
  return (
    <div className="pointer-events-none absolute inset-0">
      {frames.map((f) => (
        <div key={f} className={`absolute border-[#ed1c24] ${f}`} />
      ))}
      <svg viewBox="0 0 480 62" className="absolute top-[288px] left-[252px] h-[62px] w-[480px]" aria-hidden="true">
        <path d="M2 60L478 3" stroke="#ed1c24" strokeWidth="3" strokeLinecap="round" />
      </svg>
      {steps.map((s) => (
        <span key={s.n} className={`absolute text-[17px] leading-5 font-bold text-[#ed1c24] ${DLG} ${s.pos}`}>
          {s.n}
        </span>
      ))}
    </div>
  );
}

export default function App() {
  return (
    <div className={`relative flex h-screen flex-col overflow-hidden bg-white ${UI}`}>
      <div className="shrink-0 bg-linear-to-b from-[#e9e9ea] to-white">
        <TitleBar />
        <TabRow />
      </div>
      <Ribbon />
      <FormulaBar />
      <Worksheet />
      <SheetTabs />
      <StatusBar />
      <HyperlinkDialog />
      <Markers />
    </div>
  );
}
